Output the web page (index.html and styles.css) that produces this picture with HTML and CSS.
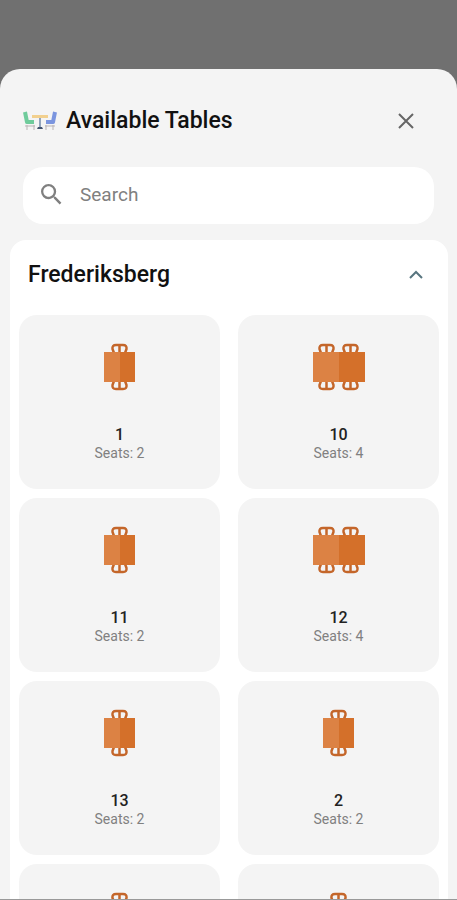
FILE: index.html
```html
<!DOCTYPE html>
<html lang="en">
<head>
<meta charset="utf-8">
<meta name="viewport" content="width=device-width, initial-scale=1">
<title>Available Tables</title>
<link rel="stylesheet" href="styles.css">
</head>
<body>
<svg class="defs" aria-hidden="true">
	<defs>
		<!-- a pair of seats, upper side of the table -->
		<g id="seats">
			<path d="M3 10L1.500 6Q1 2 5 2H12Q16 2 15.500 6L14 10M8.500 2V10" fill="none" stroke="#c4662a" stroke-width="2.500"/>
		</g>
		<symbol id="table2" viewBox="0 0 31 48">
			<use href="#seats" x="7"/>
			<use href="#seats" transform="translate(7 48) scale(1 -1)"/>
			<rect y="9" width="31" height="30" fill="#d4702a"/>
			<rect y="9" width="16" height="30" fill="#dc8244"/>
		</symbol>
		<symbol id="table4" viewBox="0 0 52 48">
			<use href="#seats" x="5"/>
			<use href="#seats" x="29"/>
			<use href="#seats" transform="translate(5 48) scale(1 -1)"/>
			<use href="#seats" transform="translate(29 48) scale(1 -1)"/>
			<rect y="9" width="52" height="30" fill="#d4702a"/>
			<rect y="9" width="26" height="30" fill="#dc8244"/>
		</symbol>
	</defs>
</svg>

<main class="sheet">
	<header class="header">
		<svg class="logo" viewBox="0 0 34 20" aria-hidden="true">
			<path d="M4 14V19M11 14V19M2 15H12M23 14V19M30 14V19M22 15H32" stroke="#b9b3b5" fill="none"/>
			<path d="M2 1L4 11H11" stroke="#6fcb9b" stroke-width="4" fill="none" stroke-linejoin="round"/>
			<path d="M32 1L30 11H23" stroke="#7b95df" stroke-width="4" fill="none" stroke-linejoin="round"/>
			<path d="M9 4H25V7H9z" fill="#f2d08e"/>
			<path d="M17 7V17" stroke="#93a5bd" stroke-width="2"/>
			<path d="M14 18L15 16H19L20 18z" fill="#43536d"/>
		</svg>
		<h1 class="title">Available Tables</h1>
		<button class="close" type="button" aria-label="Close">
			<svg viewBox="0 0 16 16"><path d="M1 1L15 15M15 1L1 15" stroke="#666" stroke-width="2" fill="none"/></svg>
		</button>
	</header>

	<label class="search">
		<svg viewBox="3 3 18 18" aria-hidden="true"><path fill="#808080" d="M15.5 14h-.79l-.28-.27A6.47 6.47 0 0 0 16 9.5 6.5 6.5 0 1 0 9.500 16c1.610 0 3.090-.590 4.230-1.570l.27.28v.79l5 4.990L20.490 19l-4.990-5zm-6 0C7.010 14 5 11.990 5 9.500S7.010 5 9.500 5 14 7.010 14 9.500 11.990 14 9.500 14z"/></svg>
		<input type="text" placeholder="Search" aria-label="Search">
	</label>

	<section class="area">
		<h2 class="area-head">
			<button class="toggle" type="button" aria-expanded="true">
				<span>Frederiksberg</span>
				<svg viewBox="0 0 14 9" aria-hidden="true"><path d="M1 8L7 2L13 8" stroke="#58757f" stroke-width="2" fill="none"/></svg>
			</button>
		</h2>
		<div class="tables">
			<button class="card" type="button">
				<svg class="two"><use href="#table2"/></svg>
				<span class="num">1</span>
				<span class="seats">Seats: 2</span>
			</button>
			<button class="card" type="button">
				<svg class="four"><use href="#table4"/></svg>
				<span class="num">10</span>
				<span class="seats">Seats: 4</span>
			</button>
			<button class="card" type="button">
				<svg class="two"><use href="#table2"/></svg>
				<span class="num">11</span>
				<span class="seats">Seats: 2</span>
			</button>
			<button class="card" type="button">
				<svg class="four"><use href="#table4"/></svg>
				<span class="num">12</span>
				<span class="seats">Seats: 4</span>
			</button>
			<button class="card" type="button">
				<svg class="two"><use href="#table2"/></svg>
				<span class="num">13</span>
				<span class="seats">Seats: 2</span>
			</button>
			<button class="card" type="button">
				<svg class="two"><use href="#table2"/></svg>
				<span class="num">2</span>
				<span class="seats">Seats: 2</span>
			</button>
			<button class="card" type="button" aria-label="Table">
				<svg class="two"><use href="#table2"/></svg>
			</button>
			<button class="card" type="button" aria-label="Table">
				<svg class="two"><use href="#table2"/></svg>
			</button>
		</div>
	</section>
</main>
</body>
</html>
```

FILE: styles.css
```css
*{
	box-sizing:border-box;
}
body{
	margin:0;
	height:100vh;
	padding-top:69px;
	display:flex;
	flex-direction:column;
	overflow:hidden;
	background:#707070;
	font-family:Roboto, "Liberation Sans", sans-serif;
	color:#111;
}
button{
	border:0;
	padding:0;
	background:none;
	font:inherit;
	color:inherit;
	cursor:pointer;
}
svg{
	display:block;
	flex:none;
}
.defs{
	position:absolute;
	width:0;
	height:0;
}
.sheet{
	flex:1;
	min-height:0;
	overflow:hidden;
	background:#f4f4f4;
	border-radius:20px 20px 0 0;
	border-bottom:1px solid #999;
}
.header{
	display:flex;
	align-items:center;
	padding:32px 38px 26px 23px;
}
.logo{
	width:34px;
	height:20px;
}
.title{
	flex:1;
	margin:0 0 0 9px;
	font-size:23px;
	line-height:40px;
	font-weight:500;
}
.close{
	display:flex;
	align-items:center;
	justify-content:center;
	width:26px;
	height:40px;
}
.close svg{
	width:16px;
	height:16px;
}
.search{
	display:flex;
	align-items:center;
	gap:18px;
	height:57px;
	margin:0 23px 16px;
	padding:0 18px 2px;
	background:#fff;
	border-radius:20px;
}
.search svg{
	width:21px;
	height:21px;
}
.search input{
	flex:1;
	min-width:0;
	border:0;
	padding:0;
	outline:0;
	background:none;
	font:19px Roboto, "Liberation Sans", sans-serif;
	color:#111;
}
.search input::placeholder{
	color:#808080;
	opacity:1;
}
.area{
	margin:0 9px 0 10px;
	padding:0 9px 9px;
	background:#fff;
	border-radius:16px;
}
.area-head{
	margin:0;
	font-size:23px;
	font-weight:500;
}
.toggle{
	display:flex;
	align-items:center;
	justify-content:space-between;
	width:100%;
	height:75px;
	padding:0 16px 7px 9px;
}
.toggle svg{
	width:14px;
	height:9px;
}
.tables{
	display:grid;
	grid-template-columns:1fr 1fr;
	gap:9px 18px;
}
.card{
	display:flex;
	flex-direction:column;
	align-items:center;
	min-height:174px;
	padding:28px 0 26px;
	background:#f4f4f4;
	border-radius:18px;
}
.card svg{
	height:48px;
	margin-bottom:35px;
}
.two{
	width:31px;
}
.four{
	width:52px;
}
.num{
	font-size:16px;
	line-height:18px;
	font-weight:500;
	color:#222;
}
.seats{
	font-size:14px;
	line-height:18px;
	color:#808080;
}
```
